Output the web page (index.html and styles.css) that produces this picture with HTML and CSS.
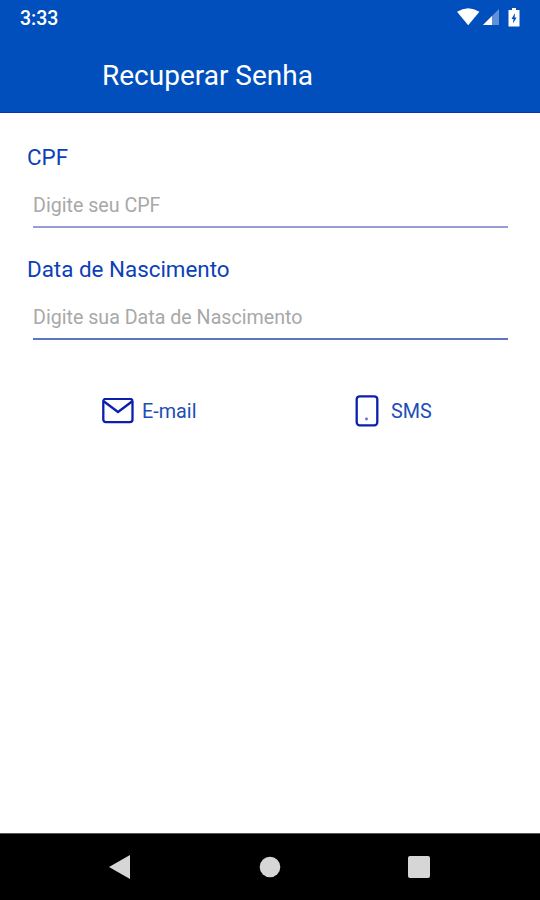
FILE: index.html
```
<!DOCTYPE html>
<html lang="pt-BR">
<head>
    <meta charset="UTF-8">
    <title>Recuperar Senha</title>
    <link rel="stylesheet" href="styles.css">
</head>
<body>
    <header>
        <div class="status-bar">
            <span class="clock">3:33</span>
            <svg class="status-icons" width="66" height="20" viewBox="0 0 66 20">
                <path d="M0 3.8Q11.2-3.4 22.4 3.8L11.2 17.2Z" fill="#fff"/>
                <path d="M26 17L42 1V17Z" fill="#5f90d8"/>
                <path d="M26 17L35 8V17Z" fill="#fff"/>
                <path d="M55 0h4v2h3.5v16.5h-11V2H55Z" fill="#fff"/>
                <path d="M58 5L54.5 11h2L56 15.5 59.6 9.5h-2Z" fill="#004fbc"/>
            </svg>
        </div>
        <h1>Recuperar Senha</h1>
    </header>

    <main>
        <form onsubmit="event.preventDefault();">
            <label for="cpf">CPF</label>
            <input type="text" id="cpf" name="cpf" placeholder="Digite seu CPF">

            <label for="nascimento">Data de Nascimento</label>
            <input type="text" id="nascimento" class="dark-line" name="nascimento" placeholder="Digite sua Data de Nascimento">

            <div class="options">
                <button type="button" class="email">
                    <svg width="32" height="26" viewBox="0 0 32 26" fill="none" stroke="#0c1fae" stroke-width="2.3">
                        <rect x="1.3" y="0.9" width="29.2" height="23.2" rx="2.5"/>
                        <path d="M2 3.5L16 14L30 3.5"/>
                    </svg>
                    <span>E-mail</span>
                </button>
                <button type="button" class="sms">
                    <svg width="24" height="32" viewBox="0 0 24 32" fill="none" stroke="#0c1fae" stroke-width="2.3">
                        <rect x="1.7" y="1.3" width="20.6" height="29" rx="3"/>
                        <circle cx="11.5" cy="24" r="1.4" fill="#5b6fc9" stroke="none"/>
                    </svg>
                    <span>SMS</span>
                </button>
            </div>
        </form>
    </main>

    <nav>
        <svg width="22" height="24" viewBox="0 0 22 24"><path d="M0 12L21 0V24Z" fill="#d6d6d6"/></svg>
        <svg width="22" height="22" viewBox="0 0 22 22"><circle cx="11" cy="11" r="10.3" fill="#d6d6d6"/></svg>
        <svg width="22" height="22" viewBox="0 0 22 22"><rect width="22" height="22" rx="2" fill="#d6d6d6"/></svg>
    </nav>
</body>
</html>
```

FILE: styles.css
```
* {
    box-sizing: border-box;
}

body {
    font-family: Roboto, sans-serif;
    margin: 0;
    height: 900px;
    display: flex;
    flex-direction: column;
    background-color: #fff;
}

header {
    height: 113px;
    background-color: #004fbc;
    border-bottom: 1px solid #0a35ae;
    color: #fff;
}

.status-bar {
    height: 38px;
    padding: 0 17px 2px 20px;
    display: flex;
    justify-content: space-between;
    align-items: center;
}

.clock {
    font-size: 19.5px;
    font-weight: 500;
}

h1 {
    margin: 0 0 0 102px;
    font-size: 28px;
    font-weight: 400;
    line-height: 75px;
}

main {
    flex: 1;
    padding: 30px 32px 0 27px;
}

label {
    display: block;
    height: 28px;
    line-height: 28px;
    font-size: 22.4px;
    color: #0c3fb8;
}

input {
    display: block;
    width: 475px;
    height: 42px;
    margin: 15px 0 27px 6px;
    padding: 0 0 2px;
    border: none;
    border-bottom: 2px solid #9a9bd4;
    outline: none;
    background: none;
    font-family: inherit;
    font-size: 19.65px;
}

input.dark-line {
    border-bottom-color: #5c75c4;
}

input::placeholder {
    color: #a8a8a8;
}

.options {
    display: flex;
    margin-top: 54px;
}

button {
    display: flex;
    align-items: center;
    height: 34px;
    padding: 0;
    border: none;
    background: none;
    font-family: inherit;
    font-size: 19.8px;
    color: #1d4db8;
}

.email {
    width: 253px;
    margin-left: 75px;
    gap: 8px;
}

.sms {
    gap: 12px;
}

nav {
    height: 67px;
    padding: 0 110px 0 109px;
    display: flex;
    justify-content: space-between;
    align-items: center;
    background-color: #000;
    border-top: 1px solid #555;
}
```
